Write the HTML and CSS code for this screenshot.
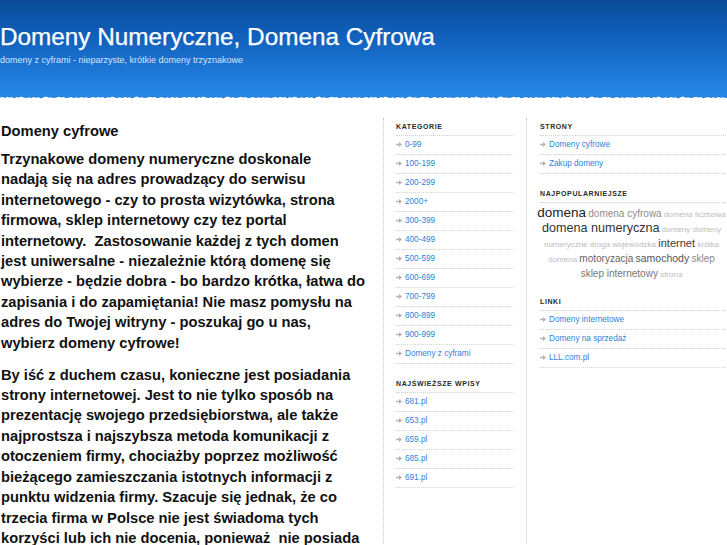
FILE: index.html
```html
<!DOCTYPE html>
<html lang="pl">
<head>
<meta charset="utf-8">
<title>Domeny Numeryczne, Domena Cyfrowa</title>
<link rel="stylesheet" href="styles.css">
</head>
<body>
<header class="masthead">
  <div class="brand">
    <h1 class="site-title">Domeny Numeryczne, Domena Cyfrowa</h1>
    <p class="site-desc">domeny z cyframi - nieparzyste, krótkie domeny trzyznakowe</p>
  </div>
  <svg class="torn" width="100%" height="8" aria-hidden="true">
    <defs>
      <pattern id="tear" patternUnits="userSpaceOnUse" width="91" height="8">
        <polygon fill="#1d6cc4" opacity="0.6" points="0,8 0,2.7 3,2.2 5,3.2 7,2 9,2.8 12,2.3 14,3.4 17,2.2 19,3 21,1.7 24,2.6 26,3.2 29,2.4 31,3.1 34,2.1 36,2.9 39,2.5 41,3.6 44,2.2 46,1.8 49,3 51,2.4 54,3.3 56,2.6 59,1.9 61,2.8 64,2.3 66,3.5 69,2.7 71,2.1 74,3.1 76,2.5 79,3.2 81,2.2 84,2.9 86,2.4 89,3.2 91,2.7 91,8"/>
        <polygon fill="#ffffff" points="0,8 0,3.5 3,3 5,4 7,2.8 9,3.6 12,3.1 14,4.2 17,3 19,3.8 21,2.5 24,3.4 26,4 29,3.2 31,3.9 34,2.9 36,3.7 39,3.3 41,4.4 44,3 46,2.6 49,3.8 51,3.2 54,4.1 56,3.4 59,2.7 61,3.6 64,3.1 66,4.3 69,3.5 71,2.9 74,3.9 76,3.3 79,4 81,3 84,3.7 86,3.2 89,4 91,3.5 91,8"/>
      </pattern>
    </defs>
    <rect x="0" y="0" width="100%" height="8" fill="url(#tear)"/>
  </svg>
</header>

<div class="page">
  <main class="content">
    <h2 class="entry-title">Domeny cyfrowe</h2>
    <p class="entry-text">Trzynakowe domeny numeryczne doskonale<br>nadają się na adres prowadzący do serwisu<br>internetowego - czy to prosta wizytówka, strona<br>firmowa, sklep internetowy czy tez portal<br>internetowy.&nbsp; Zastosowanie każdej z tych domen<br>jest uniwersalne - niezależnie którą domenę się<br>wybierze - będzie dobra - bo bardzo krótka, łatwa do<br>zapisania i do zapamiętania! Nie masz pomysłu na<br>adres do Twojej witryny - poszukaj go u nas,<br>wybierz domeny cyfrowe!</p>
    <p class="entry-text">By iść z duchem czasu, konieczne jest posiadania<br>strony internetowej. Jest to nie tylko sposób na<br>prezentację swojego przedsiębiorstwa, ale także<br>najprostsza i najszybsza metoda komunikacji z<br>otoczeniem firmy, chociażby poprzez możliwość<br>bieżącego zamieszczania istotnych informacji z<br>punktu widzenia firmy. Szacuje się jednak, że co<br>trzecia firma w Polsce nie jest świadoma tych<br>korzyści lub ich nie docenia, ponieważ&nbsp; nie posiada</p>
  </main>

  <aside class="sidebar">
    <div class="col col-left">
      <section class="widget">
        <h3 class="widget-title">Kategorie</h3>
        <ul class="links">
          <li><svg class="arr" width="6" height="5" viewBox="0 0 6 5"><path d="M0 1.7h3V0l3 2.5L3 5V3.3H0z"/></svg><a href="#">0-99</a></li>
          <li><svg class="arr" width="6" height="5" viewBox="0 0 6 5"><path d="M0 1.7h3V0l3 2.5L3 5V3.3H0z"/></svg><a href="#">100-199</a></li>
          <li><svg class="arr" width="6" height="5" viewBox="0 0 6 5"><path d="M0 1.7h3V0l3 2.5L3 5V3.3H0z"/></svg><a href="#">200-299</a></li>
          <li><svg class="arr" width="6" height="5" viewBox="0 0 6 5"><path d="M0 1.7h3V0l3 2.5L3 5V3.3H0z"/></svg><a href="#">2000+</a></li>
          <li><svg class="arr" width="6" height="5" viewBox="0 0 6 5"><path d="M0 1.7h3V0l3 2.5L3 5V3.3H0z"/></svg><a href="#">300-399</a></li>
          <li><svg class="arr" width="6" height="5" viewBox="0 0 6 5"><path d="M0 1.7h3V0l3 2.5L3 5V3.3H0z"/></svg><a href="#">400-499</a></li>
          <li><svg class="arr" width="6" height="5" viewBox="0 0 6 5"><path d="M0 1.7h3V0l3 2.5L3 5V3.3H0z"/></svg><a href="#">500-599</a></li>
          <li><svg class="arr" width="6" height="5" viewBox="0 0 6 5"><path d="M0 1.7h3V0l3 2.5L3 5V3.3H0z"/></svg><a href="#">600-699</a></li>
          <li><svg class="arr" width="6" height="5" viewBox="0 0 6 5"><path d="M0 1.7h3V0l3 2.5L3 5V3.3H0z"/></svg><a href="#">700-799</a></li>
          <li><svg class="arr" width="6" height="5" viewBox="0 0 6 5"><path d="M0 1.7h3V0l3 2.5L3 5V3.3H0z"/></svg><a href="#">800-899</a></li>
          <li><svg class="arr" width="6" height="5" viewBox="0 0 6 5"><path d="M0 1.7h3V0l3 2.5L3 5V3.3H0z"/></svg><a href="#">900-999</a></li>
          <li><svg class="arr" width="6" height="5" viewBox="0 0 6 5"><path d="M0 1.7h3V0l3 2.5L3 5V3.3H0z"/></svg><a href="#">Domeny z cyframi</a></li>
        </ul>
      </section>
      <section class="widget">
        <h3 class="widget-title">Najświeższe wpisy</h3>
        <ul class="links">
          <li><svg class="arr" width="6" height="5" viewBox="0 0 6 5"><path d="M0 1.7h3V0l3 2.5L3 5V3.3H0z"/></svg><a href="#">681.pl</a></li>
          <li><svg class="arr" width="6" height="5" viewBox="0 0 6 5"><path d="M0 1.7h3V0l3 2.5L3 5V3.3H0z"/></svg><a href="#">653.pl</a></li>
          <li><svg class="arr" width="6" height="5" viewBox="0 0 6 5"><path d="M0 1.7h3V0l3 2.5L3 5V3.3H0z"/></svg><a href="#">659.pl</a></li>
          <li><svg class="arr" width="6" height="5" viewBox="0 0 6 5"><path d="M0 1.7h3V0l3 2.5L3 5V3.3H0z"/></svg><a href="#">685.pl</a></li>
          <li><svg class="arr" width="6" height="5" viewBox="0 0 6 5"><path d="M0 1.7h3V0l3 2.5L3 5V3.3H0z"/></svg><a href="#">691.pl</a></li>
        </ul>
      </section>
    </div>

    <div class="col col-right">
      <section class="widget">
        <h3 class="widget-title">Strony</h3>
        <ul class="links">
          <li><svg class="arr" width="6" height="5" viewBox="0 0 6 5"><path d="M0 1.7h3V0l3 2.5L3 5V3.3H0z"/></svg><a href="#">Domeny cyfrowe</a></li>
          <li><svg class="arr" width="6" height="5" viewBox="0 0 6 5"><path d="M0 1.7h3V0l3 2.5L3 5V3.3H0z"/></svg><a href="#">Zakup domeny</a></li>
        </ul>
      </section>
      <section class="widget">
        <h3 class="widget-title">Najpopularniejsze</h3>
        <div class="tagcloud">
          <a href="#" class="tag t-xl">domena</a> <a href="#" class="tag t-m">domena cyfrowa</a> <a href="#" class="tag t-xs">domena liczbowa</a><br>
          <a href="#" class="tag t-l">domena numeryczna</a> <a href="#" class="tag t-xs">domeny</a> <a href="#" class="tag t-xs">domeny</a><br>
          <a href="#" class="tag t-xs">numeryczne</a> <a href="#" class="tag t-xs">droga wojewódzka</a> <a href="#" class="tag t-ml">internet</a> <a href="#" class="tag t-xs">krótka</a><br>
          <a href="#" class="tag t-xs">domena</a> <a href="#" class="tag t-m2">motoryzacja</a> <a href="#" class="tag t-m3">samochody</a> <a href="#" class="tag t-s">sklep</a><br>
          <a href="#" class="tag t-s2">sklep internetowy</a> <a href="#" class="tag t-xs">strona</a>
        </div>
      </section>
      <section class="widget">
        <h3 class="widget-title">Linki</h3>
        <ul class="links">
          <li><svg class="arr" width="6" height="5" viewBox="0 0 6 5"><path d="M0 1.7h3V0l3 2.5L3 5V3.3H0z"/></svg><a href="#">Domeny internetowe</a></li>
          <li><svg class="arr" width="6" height="5" viewBox="0 0 6 5"><path d="M0 1.7h3V0l3 2.5L3 5V3.3H0z"/></svg><a href="#">Domeny na sprzedaż</a></li>
          <li><svg class="arr" width="6" height="5" viewBox="0 0 6 5"><path d="M0 1.7h3V0l3 2.5L3 5V3.3H0z"/></svg><a href="#">LLL.com.pl</a></li>
        </ul>
      </section>
    </div>
  </aside>
</div>
</body>
</html>
```

FILE: styles.css
```css
html, body {
  margin: 0;
  padding: 0;
  background: #ffffff;
  overflow: hidden;
}

body {
  font-family: "Liberation Sans", Arial, Helvetica, sans-serif;
  color: #111111;
}

/* ---------- header ---------- */
.masthead {
  background: linear-gradient(to bottom, #0a4a98 0%, #1160bb 35%, #1d77d6 70%, #2a8ceb 100%);
}

.brand {
  height: 94px;
  box-sizing: border-box;
  padding-top: 23px;
}

.site-title {
  margin: 0;
  font-size: 24.3px;
  line-height: 28px;
  font-weight: normal;
  color: #ffffff;
  white-space: nowrap;
  -webkit-text-stroke: 0.25px #ffffff;
}

.site-desc {
  margin: 3px 0 0;
  font-size: 9px;
  line-height: 12px;
  color: #d6e6fa;
}

.torn {
  display: block;
}

/* ---------- layout ---------- */
.page {
  display: flex;
  width: 736px;
}

.content {
  flex: 0 0 383px;
  box-sizing: border-box;
  padding: 20px 0 0 1px;
}

.sidebar {
  display: flex;
  padding-top: 16px;
}

/* ---------- main text ---------- */
.entry-title {
  margin: 0 0 9px;
  font-size: 14.7px;
  line-height: 18px;
  font-weight: bold;
  color: #111111;
}

.entry-text {
  margin: 0 0 11.6px;
  font-size: 14.7px;
  line-height: 20.4px;
  font-weight: bold;
  color: #111111;
  white-space: nowrap;
}

/* ---------- sidebar ---------- */
.col {
  border-left: 1px dotted #c8c8c8;
  padding-top: 3.5px;
  min-height: 440px;
}

.col-left {
  width: 118px;
  padding-left: 12px;
  padding-right: 12px;
}

.col-right {
  width: 209px;
}

.col-right .widget-title,
.col-right .links {
  margin-left: 13px;
}

.widget {
  margin-bottom: 15px;
}

.widget-title {
  margin: 0;
  padding-bottom: 4px;
  border-bottom: 1px dotted #cfcfcf;
  font-size: 7px;
  line-height: 9px;
  font-weight: bold;
  letter-spacing: 0.6px;
  text-transform: uppercase;
  color: #2b2b2b;
}

.links {
  list-style: none;
  margin: 0;
  padding: 0;
}

.links li {
  display: flex;
  align-items: center;
  height: 18px;
  border-bottom: 1px dotted #d4d4d4;
  font-size: 8.2px;
}

.links a {
  color: #2f7fdc;
  text-decoration: none;
}

.arr {
  flex: 0 0 auto;
  margin-right: 3px;
  fill: #b3b3a8;
}

/* ---------- tag cloud ---------- */
.tagcloud {
  padding-top: 3px;
  text-align: center;
  font-size: 8px;
  line-height: 15px;
  white-space: nowrap;
}

.tag {
  text-decoration: none;
  line-height: 1;
}

.t-xl { font-size: 13.5px; color: #1e1e1e; }
.t-l  { font-size: 12.6px; color: #333333; }
.t-ml { font-size: 11px;   color: #3c3c3c; }
.t-m  { font-size: 10px;   color: #8c8c8c; }
.t-m2 { font-size: 10px;   color: #666666; }
.t-m3 { font-size: 10.5px; color: #555555; }
.t-s  { font-size: 10px;   color: #8a8a8a; }
.t-s2 { font-size: 10px;   color: #777777; }
.t-xs { font-size: 8px;    color: #bdbdbd; }
```
